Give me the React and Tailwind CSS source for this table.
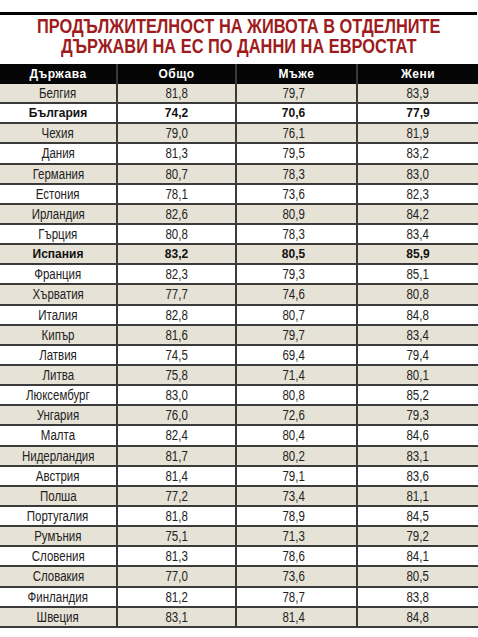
const rows = [
    ["Белгия", "81,8", "79,7", "83,9"],
    ["България", "74,2", "70,6", "77,9", true],
    ["Чехия", "79,0", "76,1", "81,9"],
    ["Дания", "81,3", "79,5", "83,2"],
    ["Германия", "80,7", "78,3", "83,0"],
    ["Естония", "78,1", "73,6", "82,3"],
    ["Ирландия", "82,6", "80,9", "84,2"],
    ["Гърция", "80,8", "78,3", "83,4"],
    ["Испания", "83,2", "80,5", "85,9", true],
    ["Франция", "82,3", "79,3", "85,1"],
    ["Хърватия", "77,7", "74,6", "80,8"],
    ["Италия", "82,8", "80,7", "84,8"],
    ["Кипър", "81,6", "79,7", "83,4"],
    ["Латвия", "74,5", "69,4", "79,4"],
    ["Литва", "75,8", "71,4", "80,1"],
    ["Люксембург", "83,0", "80,8", "85,2"],
    ["Унгария", "76,0", "72,6", "79,3"],
    ["Малта", "82,4", "80,4", "84,6"],
    ["Нидерландия", "81,7", "80,2", "83,1"],
    ["Австрия", "81,4", "79,1", "83,6"],
    ["Полша", "77,2", "73,4", "81,1"],
    ["Португалия", "81,8", "78,9", "84,5"],
    ["Румъния", "75,1", "71,3", "79,2"],
    ["Словения", "81,3", "78,6", "84,1"],
    ["Словакия", "77,0", "73,6", "80,5"],
    ["Финландия", "81,2", "78,7", "83,8"],
    ["Швеция", "83,1", "81,4", "84,8"],
];

// no narrow font installed, so squeeze Liberation Sans horizontally
const Narrow = ({ children }) => (
    <span className="inline-block whitespace-nowrap scale-x-[0.82]">{children}</span>
);

const LifeRow = ({ row, index }) => {
    const [country, total, men, women, bold] = row;
    const text = bold ? "font-bold text-[12px] text-[#111]" : "text-[14px] text-[#222]";
    const wrap = (v) => (bold ? v : <Narrow>{v}</Narrow>);
    return (
        <div
            className={`flex h-[20.15px] items-center border-b-2 border-[#3b3b3b] leading-none ${
                index % 2 === 0 ? "bg-[#e6e2d6]" : "bg-white"
            } ${text}`}
        >
            <div className="flex h-full w-[118px] items-center justify-center border-r-2 border-[#3b3b3b]">{wrap(country)}</div>
            <div className="flex h-full w-[119px] items-center justify-center border-r-2 border-[#3b3b3b]">{wrap(total)}</div>
            <div className="flex h-full w-[121px] items-center justify-center border-r-2 border-[#3b3b3b] pr-[6px]">{wrap(men)}</div>
            <div className="flex h-full flex-1 items-center justify-center">{wrap(women)}</div>
        </div>
    );
};

const App = () => {
    return (
        <div className="h-[637px] w-[478px] overflow-hidden bg-white font-['Liberation_Sans',Arial,sans-serif]">
            <div className="h-[12px]" />
            <div className="h-[3px] w-[477px] bg-black" />
            <h1 className="mt-[1px] flex flex-col items-center text-[21px] font-bold uppercase leading-[19.5px] text-[#9e1b20]">
                <span className="block whitespace-nowrap scale-x-[0.78]">Продължителност на живота в отделните</span>
                <span className="block whitespace-nowrap scale-x-[0.78]">държави на ЕС по данни на Евростат</span>
            </h1>
            <div className="mt-[9px]">
                {/* header */}
                <div className="flex h-[20px] items-center bg-[#050505] text-[12px] font-bold tracking-[0.5px] text-white leading-none">
                    <div className="flex h-full w-[118px] items-center justify-center border-r-2 border-[#3a3a3a]">Държава</div>
                    <div className="flex h-full w-[119px] items-center justify-center border-r-2 border-[#3a3a3a]">Общо</div>
                    <div className="flex h-full w-[121px] items-center justify-center border-r-2 border-[#3a3a3a]">Мъже</div>
                    <div className="flex h-full flex-1 items-center justify-center">Жени</div>
                </div>
                {rows.map((row, i) => (
                    <LifeRow key={row[0]} row={row} index={i} />
                ))}
            </div>
        </div>
    );
};

export default App;
